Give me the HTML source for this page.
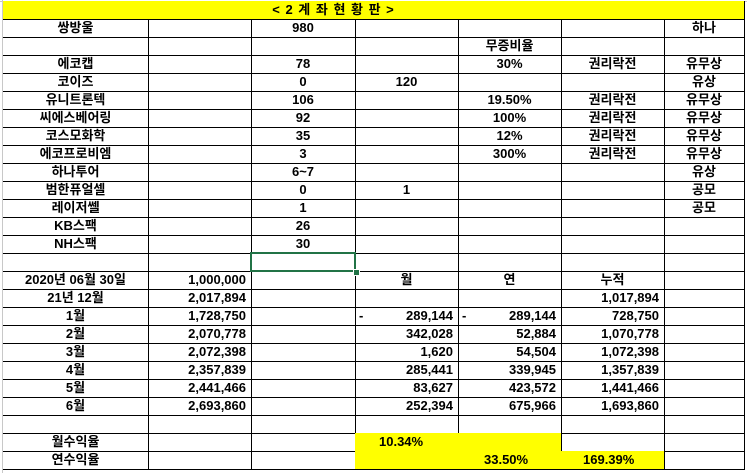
<!DOCTYPE html>
<html><head><meta charset="utf-8"><style>
body{margin:0;width:747px;height:473px;background:#fff;overflow:hidden;position:relative;font-family:"Liberation Sans","Noto Sans CJK KR",sans-serif;font-size:13px;font-weight:bold;color:#000}
.c{position:absolute;box-sizing:border-box;height:19px;line-height:18px;border-right:1px solid #000;border-bottom:1px solid #000;white-space:nowrap;overflow:visible;text-align:center}
.r{text-align:right;padding-right:5px}
.y{background:#ffff00}
</style></head><body>
<div style="position:absolute;left:2px;top:0;width:1px;height:473px;background:#c8c8c8"></div>
<div style="position:absolute;left:0;top:1px;width:747px;height:1px;background:#c8c8c8"></div>
<div id="g"></div>
<script>
var X=[3,148,251,355,458,561,664,744];
var rows=[
["쌍방울","","980","","","","하나"],
["","","","","무증비율","",""],
["에코캡","","78","","30%","권리락전","유무상"],
["코이즈","","0","120","","","유상"],
["유니트론텍","","106","","19.50%","권리락전","유무상"],
["씨에스베어링","","92","","100%","권리락전","유무상"],
["코스모화학","","35","","12%","권리락전","유무상"],
["에코프로비엠","","3","","300%","권리락전","유무상"],
["하나투어","","6~7","","","","유상"],
["범한퓨얼셀","","0","1","","","공모"],
["레이저쎌","","1","","","","공모"],
["KB스팩","","26","","","",""],
["NH스팩","","30","","","",""],
["","","","","","",""],
["2020년 06월 30일","1,000,000","","월","연","누적",""],
["21년 12월","2,017,894","","","","1,017,894",""],
["1월","1,728,750","","-|289,144","-|289,144","728,750",""],
["2월","2,070,778","","342,028","52,884","1,070,778",""],
["3월","2,072,398","","1,620","54,504","1,072,398",""],
["4월","2,357,839","","285,441","339,945","1,357,839",""],
["5월","2,441,466","","83,627","423,572","1,441,466",""],
["6월","2,693,860","","252,394","675,966","1,693,860",""],
["","","","","","",""],
["월수익율","","","10.34%","","",""],
["연수익율","","","","33.50%","169.39%",""]];
var h='';
h+='<div class="c y" style="left:3px;top:1px;width:'+(664-3+1)+'px;height:19px;line-height:18px;letter-spacing:1px">&lt; 2 계 좌 현 황 판 &gt;</div>';
h+='<div class="c y" style="left:664px;top:1px;width:81px;height:19px"></div>';
for(var i=0;i<rows.length;i++){
 var t=19+i*18;
 for(var j=0;j<7;j++){
  var v=rows[i][j],cls='c',st='',w=X[j+1]-X[j]+1,l=X[j];
  if(j==0) {l=3;w=X[1]-3+1;}
  if(i>=14 && (j==1||(j>=3&&j<=5)) && v!==''&&!(i==14&&j>=3)) cls+=' r';
  if(i==23&&j==3){cls='c y';v='<span style="position:absolute;left:24px">10.34%</span>';}
  if(i==24&&j==4){cls='c y';v='<span style="position:absolute;left:26px">33.50%</span>';}
  if(i==24&&j==5){cls='c y';v='<span style="position:absolute;left:22px">169.39%</span>';}
  if(i==23&&j==4) cls='c y';
  if(i==24&&j==3) cls='c y';
  if(v.indexOf('|')>0){var p=v.split('|');v='<span style="position:absolute;left:4px">'+p[0]+'</span>'+p[1];}
  h+='<div class="'+cls+'" style="left:'+l+'px;top:'+t+'px;width:'+w+'px;'+st+'">'+v+'</div>';
 }
}
h+='<div style="position:absolute;left:250px;top:252px;width:106px;height:20px;box-sizing:border-box;border:2px solid #217346"></div>';
h+='<div style="position:absolute;left:353px;top:269px;width:5px;height:5px;background:#217346;border:1px solid #fff"></div>';
document.getElementById('g').innerHTML=h;
</script>
</body></html>
